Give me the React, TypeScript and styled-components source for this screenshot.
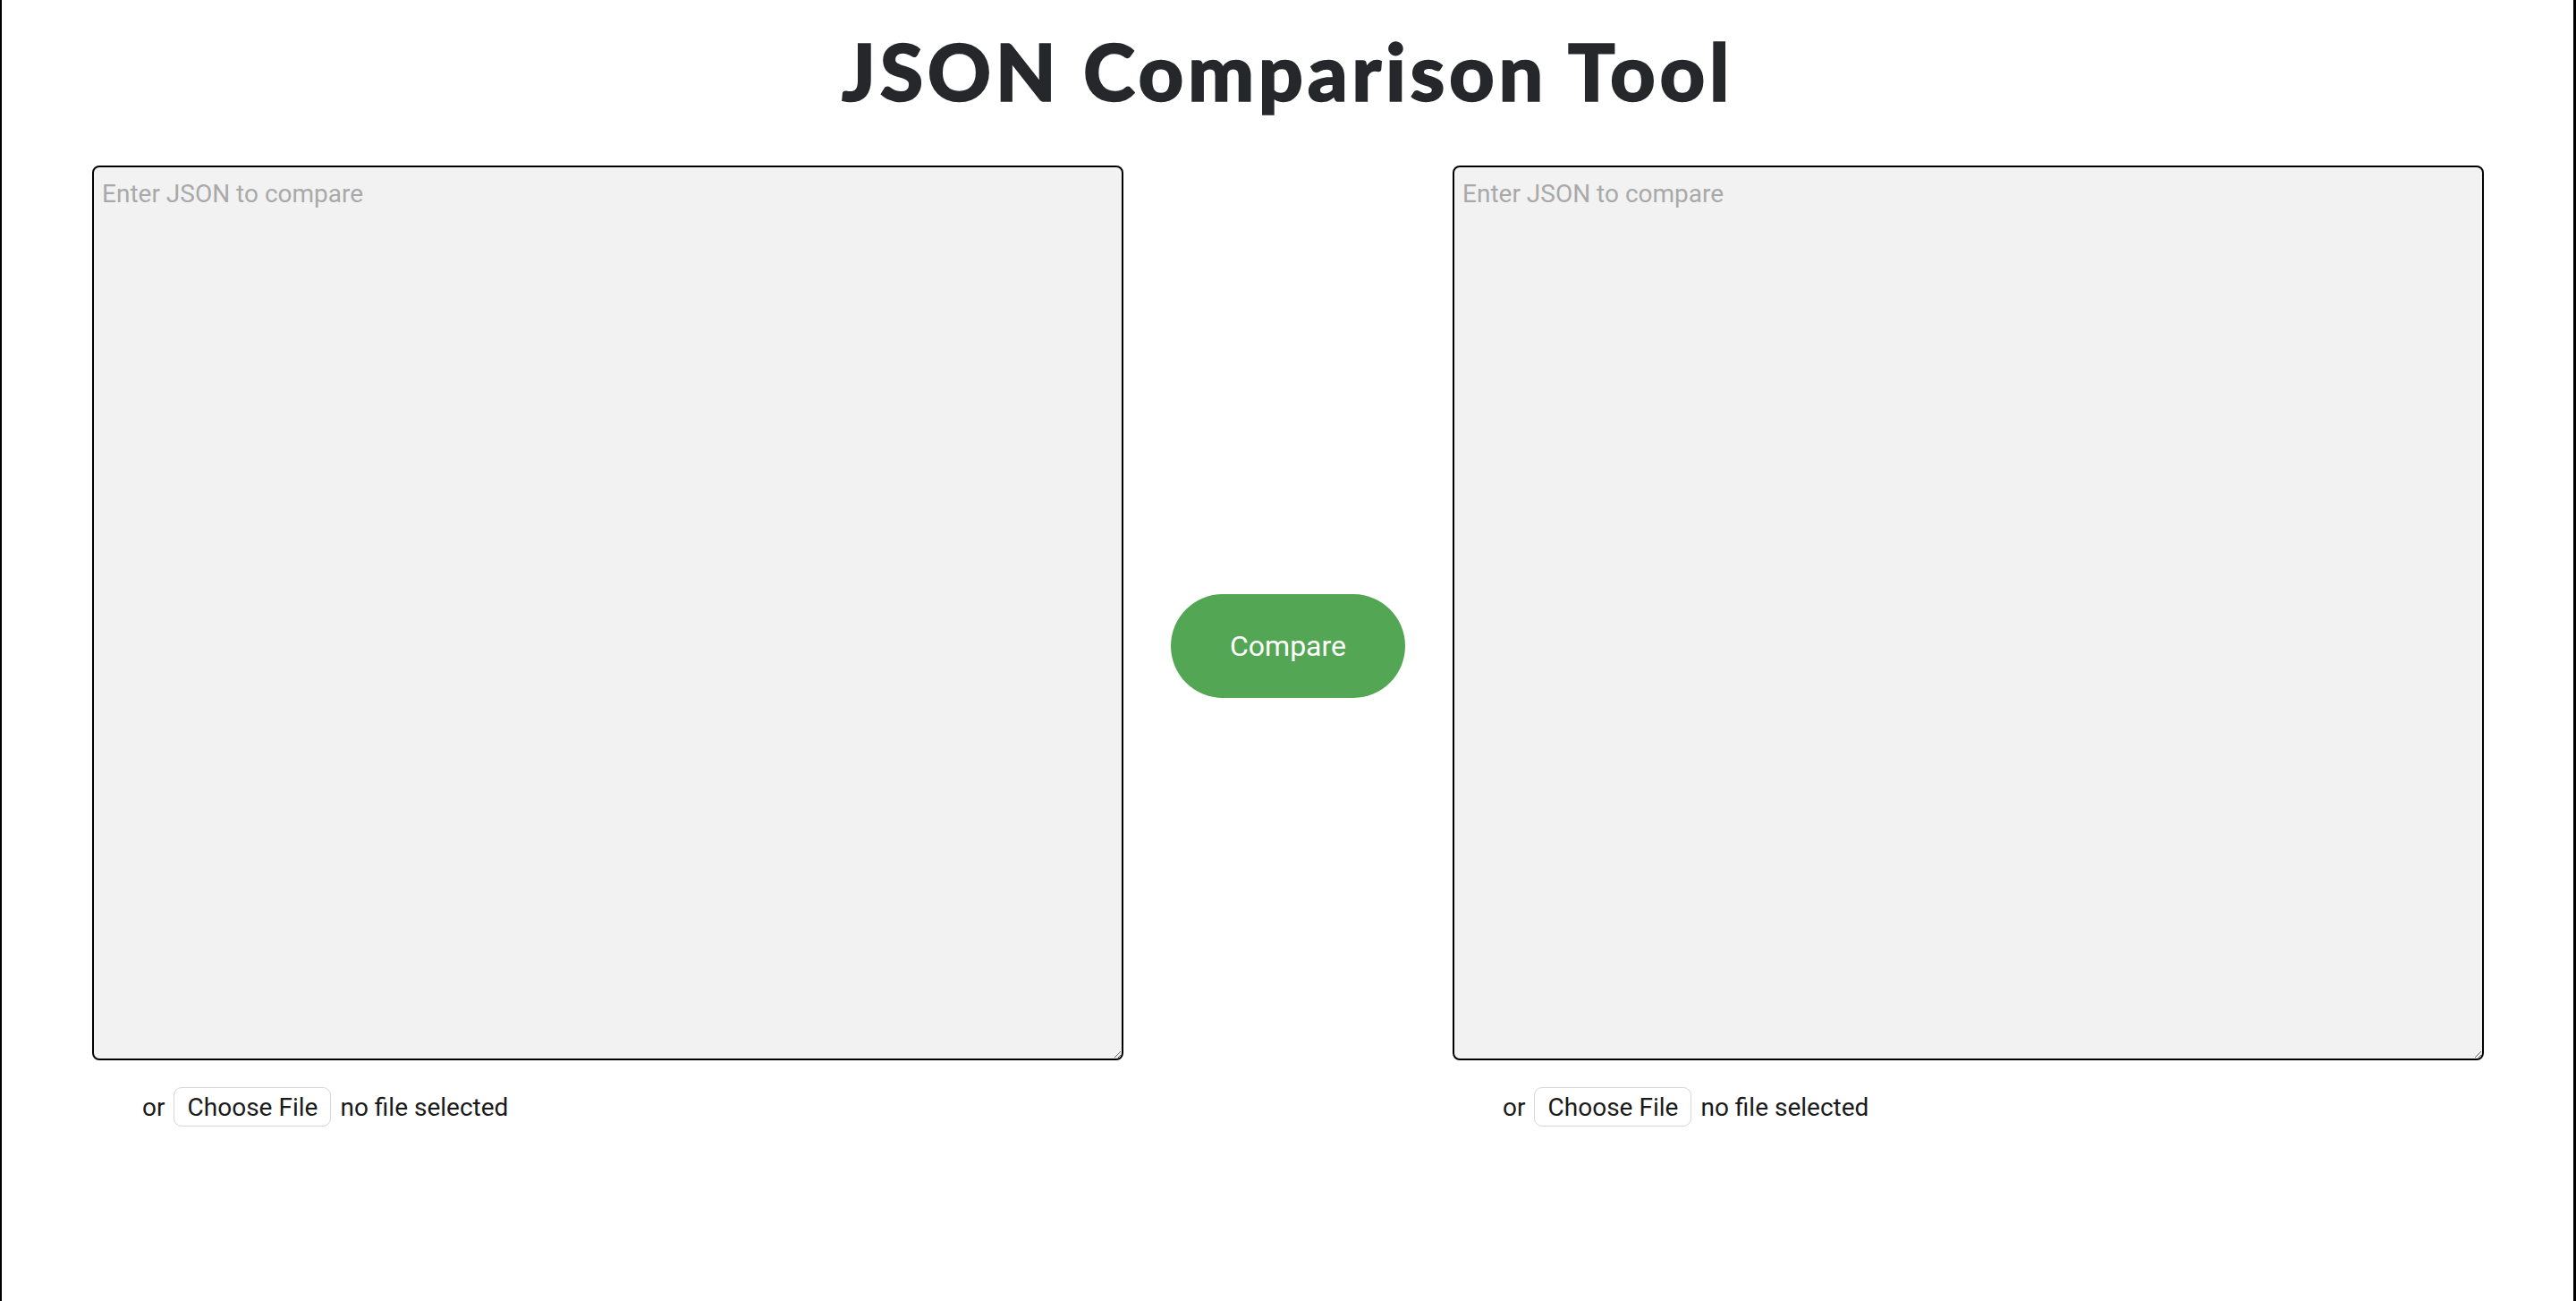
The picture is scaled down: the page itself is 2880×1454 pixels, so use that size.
import React from "react";
import styled, { createGlobalStyle } from "styled-components";

const Global = createGlobalStyle`
  html, body { margin: 0; padding: 0; background: #fff; }
  body { font-family: Roboto, "Liberation Sans", Arial, sans-serif; }
  * { box-sizing: border-box; }
`;

const Page = styled.div`
  min-height: 100vh;
  border-left: 2px solid #000;
  border-right: 3px solid #000;
  display: flex;
  flex-direction: column;
`;

const Title = styled.h1`
  margin: 19px 0 46px;
  text-align: center;
  font-family: Lato, "Open Sans", sans-serif;
  font-weight: 900;
  font-size: 88px;
  line-height: 120px;
  color: #25272b;
  letter-spacing: 4.6px;
  -webkit-text-stroke: 1.5px #25272b;
`;

const Row = styled.div`
  display: flex;
  align-items: center;
  gap: 53px;
  padding: 0 100px 0 101px;
`;

const Column = styled.div`
  flex: 1;
  display: flex;
  flex-direction: column;
  gap: 30px;
  min-width: 0;
`;

const Editor = styled.textarea`
  width: 100%;
  height: 1000px;
  border: 2px solid #000;
  border-radius: 8px;
  background: #f2f2f2;
  padding: 13px 9px;
  font-family: Roboto, "Liberation Sans", sans-serif;
  font-size: 28px;
  line-height: 1.2;
  color: #222;
  outline: none;
  &::placeholder { color: #a9a9a9; }
`;

const FileRow = styled.div`
  display: flex;
  align-items: center;
  gap: 10px;
  padding-left: 56px;
  font-family: Roboto, "Liberation Sans", sans-serif;
  font-size: 28px;
  color: #1a1a1a;
  height: 44px;
`;

const FileButton = styled.label`
  display: inline-flex;
  align-items: center;
  justify-content: center;
  width: 176px;
  height: 44px;
  background: #fff;
  border: 1px solid #d6d6d6;
  border-radius: 9px;
  font-size: 28px;
  color: #1a1a1a;
  cursor: pointer;
  input { display: none; }
`;

const CompareButton = styled.button`
  flex: none;
  width: 262px;
  height: 116px;
  border: none;
  border-radius: 58px;
  background: #53a653;
  color: #fff;
  font-family: Roboto, "Liberation Sans", sans-serif;
  font-size: 32px;
  cursor: pointer;
`;

function Side() {
  return (
    <Column>
      <Editor placeholder="Enter JSON to compare" />
      <FileRow>
        <span>or</span>
        <FileButton>
          Choose File
          <input type="file" />
        </FileButton>
        <span>no file selected</span>
      </FileRow>
    </Column>
  );
}

export default function App() {
  return (
    <>
      <Global />
      <Page>
        <Title>JSON Comparison Tool</Title>
        <Row>
          <Side />
          <CompareButton>Compare</CompareButton>
          <Side />
        </Row>
      </Page>
    </>
  );
}
